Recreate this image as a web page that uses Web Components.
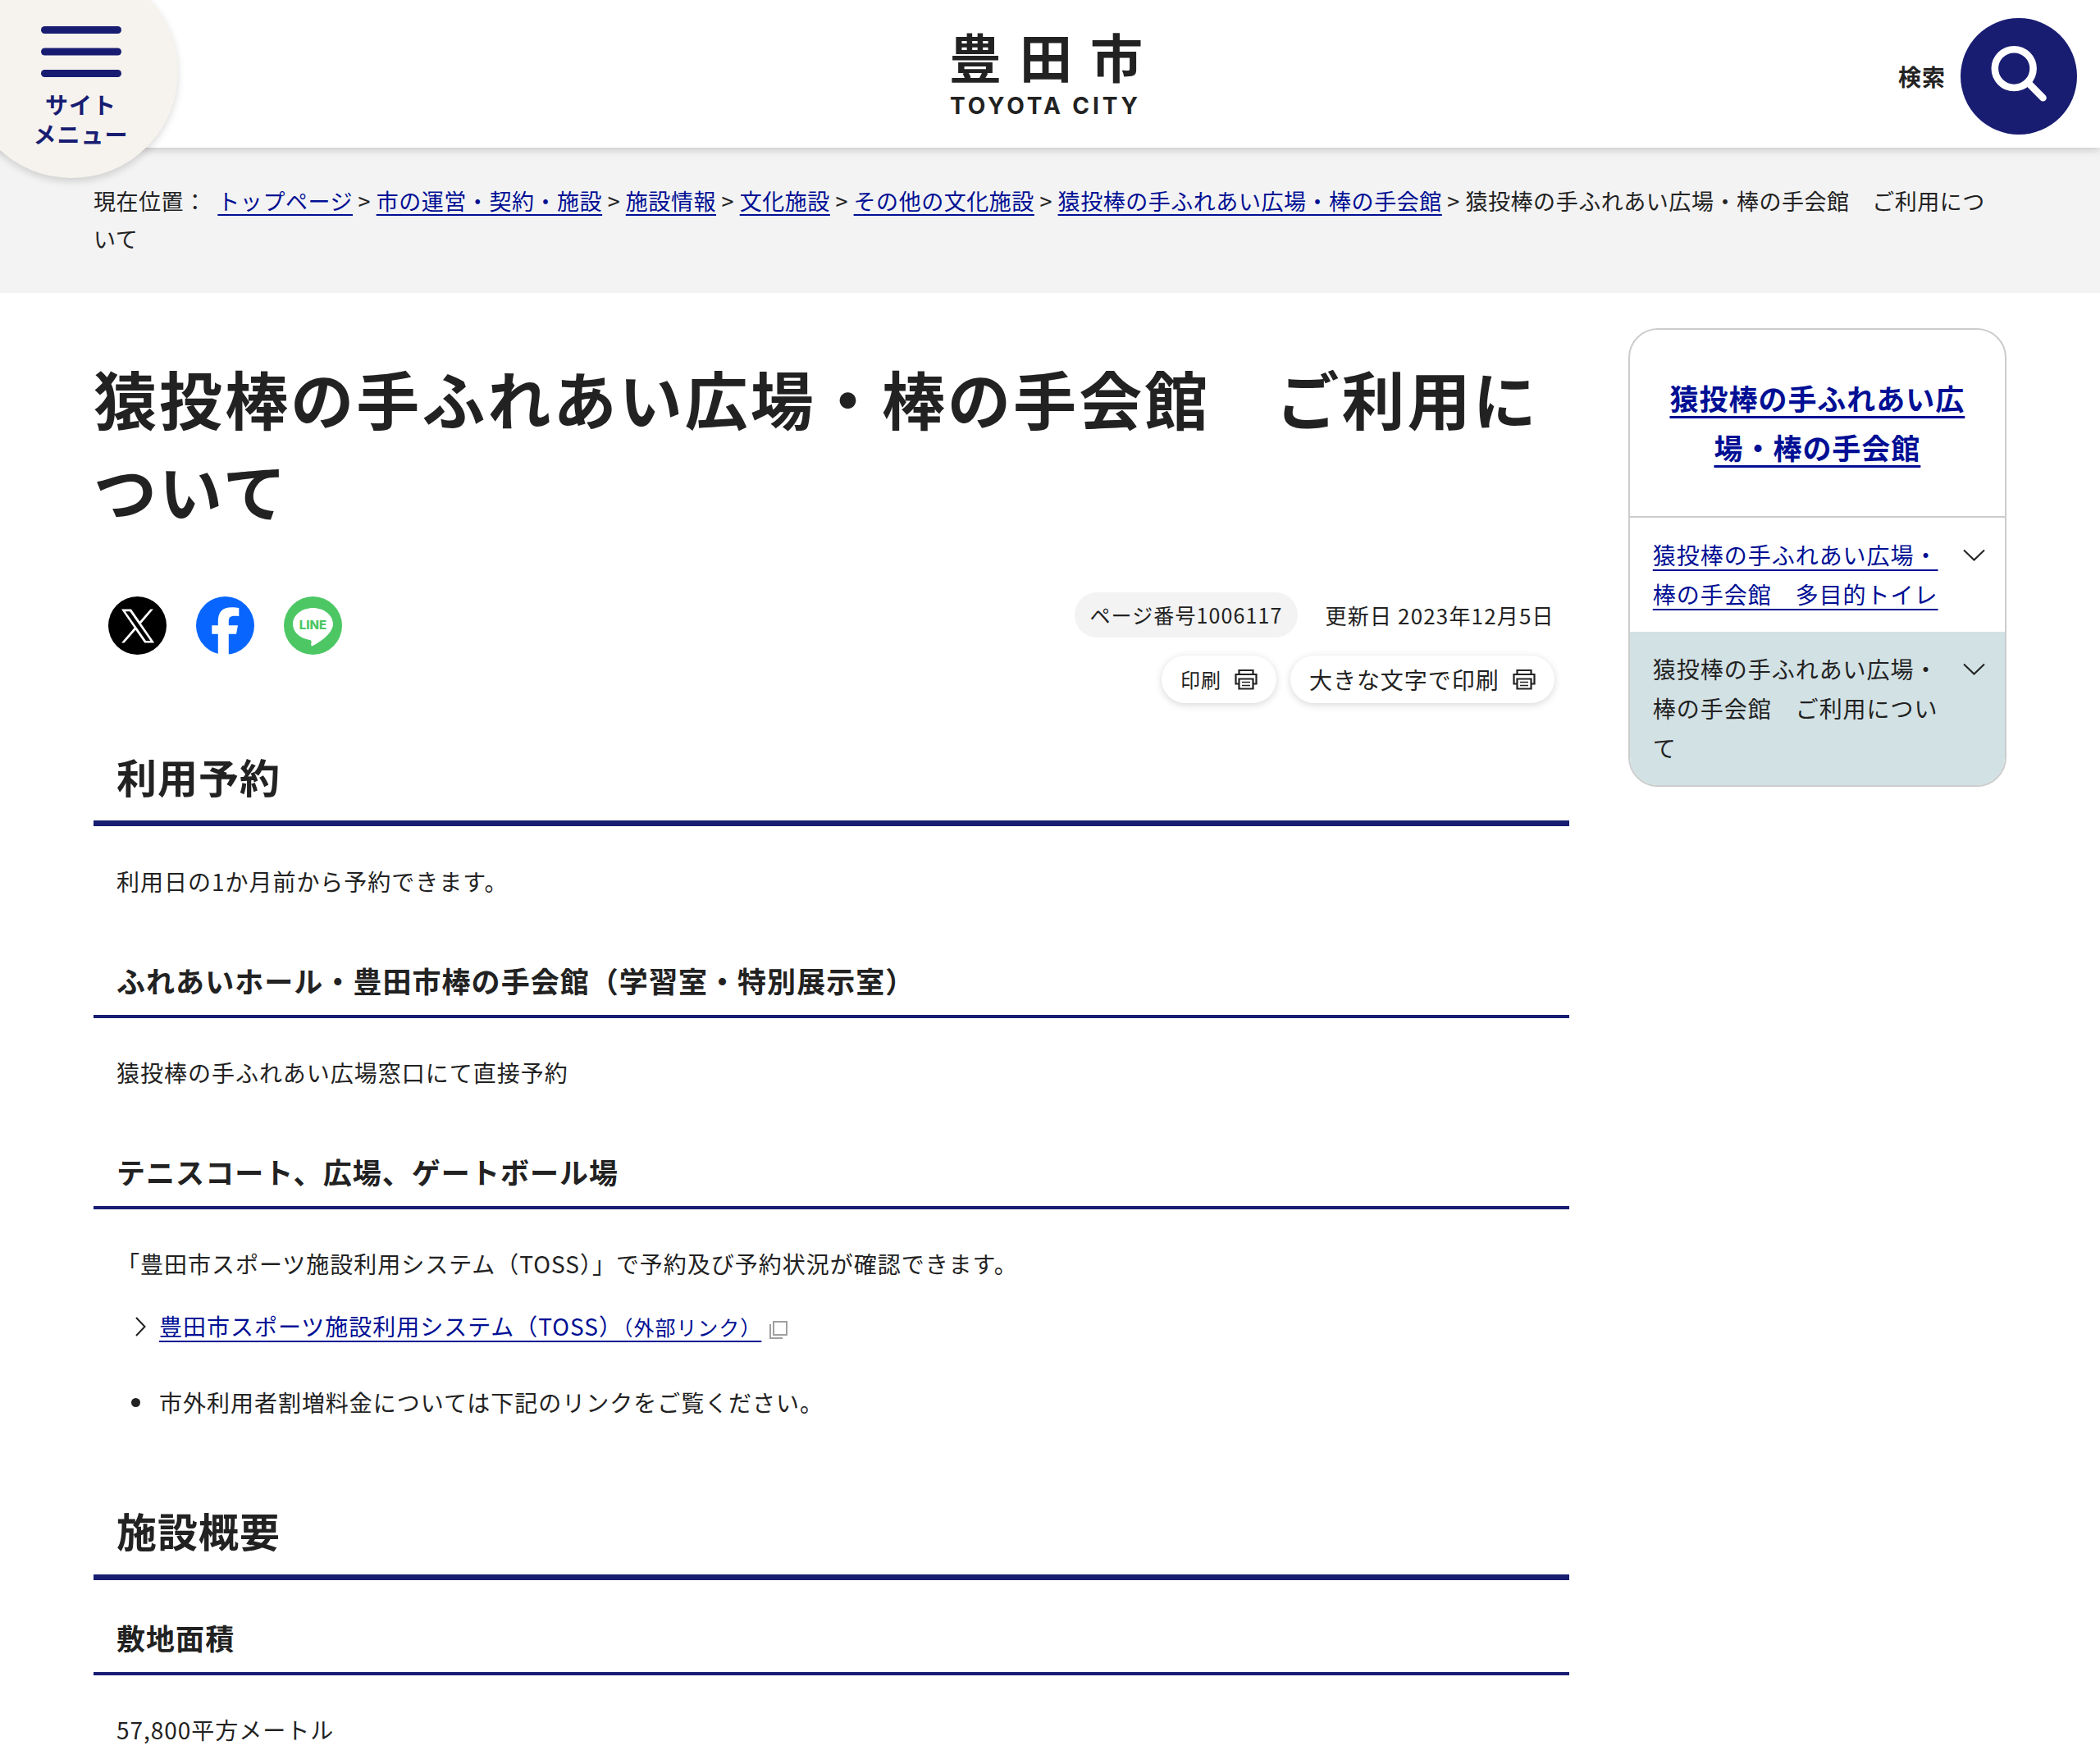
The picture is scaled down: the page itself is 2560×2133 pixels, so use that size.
<!DOCTYPE html>
<html lang="ja">
<head>
<meta charset="UTF-8">
<meta name="viewport" content="width=device-width, initial-scale=1">
<title>猿投棒の手ふれあい広場・棒の手会館 ご利用について</title>
<style>
  body {
    margin: 0;
    background: #ffffff;
    color: #222222;
    font-family: "Noto Sans CJK JP", sans-serif;
    font-size: 28px;
    line-height: 48px;
    letter-spacing: 0.035em;
    --navy: #181d72;
    --link: #000f94;
  }
</style>
</head>
<body>
<toyota-header></toyota-header>
<ruta-pagina></ruta-pagina>
<page-layout>
  <main>
    <page-title>猿投棒の手ふれあい広場・棒の手会館　ご利用について</page-title>
    <page-tools></page-tools>

    <section-title>利用予約</section-title>
    <text-block>利用日の1か月前から予約できます。</text-block>

    <sub-title>ふれあいホール・豊田市棒の手会館（学習室・特別展示室）</sub-title>
    <text-block>猿投棒の手ふれあい広場窓口にて直接予約</text-block>

    <sub-title>テニスコート、広場、ゲートボール場</sub-title>
    <text-block>「豊田市スポーツ施設利用システム（TOSS）」で予約及び予約状況が確認できます。</text-block>
    <link-list></link-list>
    <bullet-item>市外利用者割増料金については下記のリンクをご覧ください。</bullet-item>

    <section-title class="next">施設概要</section-title>
    <sub-title class="first">敷地面積</sub-title>
    <text-block>57,800平方メートル</text-block>
  </main>
  <side-menu slot="side"></side-menu>
</page-layout>

<script>
class ToyotaHeader extends HTMLElement {
  constructor() {
    super();
    this.attachShadow({ mode: 'open' }).innerHTML = `
    <style>
      :host { display: block; position: relative; z-index: 2; }
      header {
        display: grid;
        grid-template-columns: 1fr auto 1fr;
        height: 180px;
        background: #ffffff;
        box-shadow: 0 2px 10px rgba(0, 0, 0, 0.2);
      }
      button {
        font: inherit;
        color: inherit;
        letter-spacing: inherit;
        border: 0;
        padding: 0;
        background: none;
        cursor: pointer;
      }
      /* the round menu button hangs over the corner */
      .menu {
        position: absolute;
        top: -42px;
        left: -42px;
        width: 259px;
        height: 259px;
        padding: 74px 0 0 22px;
        display: flex;
        flex-direction: column;
        align-items: center;
        border-radius: 50%;
        background: #f6f3ee;
        color: var(--navy);
        font-weight: 700;
        line-height: 36px;
        box-shadow: 0 4px 10px rgba(0, 0, 0, 0.15);
      }
      .menu svg { display: block; margin-bottom: 15px; }
      .logo {
        grid-column: 2;
        padding: 32px 10px 0 0;
        display: flex;
        flex-direction: column;
        gap: 7px;
        color: inherit;
        text-decoration: none;
        font-weight: 700;
      }
      .kanji {
        display: flex;
        gap: 22px;
        font-size: 64px;
        line-height: 70px;
        letter-spacing: 0;
      }
      .roman {
        padding-left: 1px;
        font-family: Inter, "Liberation Sans", sans-serif;
        font-weight: 700;
        font-size: 28px;
        line-height: 40px;
        letter-spacing: 0.14em;
      }
      .search {
        justify-self: end;
        align-self: center;
        display: flex;
        align-items: center;
        gap: 18px;
        margin: 5px 28px 0 0;
        font-weight: 700;
      }
      .search svg { display: block; }
    </style>
    <header>
      <button class="menu" type="button">
        <svg width="98" height="62" viewBox="0 0 98 62" fill="currentColor" aria-hidden="true">
          <rect width="98" height="9" rx="4.5"/>
          <rect y="26.5" width="98" height="9" rx="4.5"/>
          <rect y="53" width="98" height="9" rx="4.5"/>
        </svg>
        <span>サイト</span>
        <span>メニュー</span>
      </button>
      <a class="logo" href="#">
        <span class="kanji"><span>豊</span><span>田</span><span>市</span></span>
        <span class="roman">TOYOTA CITY</span>
      </a>
      <button class="search" type="button">
        <span>検索</span>
        <svg width="142" height="142" viewBox="0 0 142 142" aria-hidden="true">
          <circle cx="71" cy="71" r="71" fill="#181d72"/>
          <g fill="none" stroke="#ffffff" stroke-width="8.6" stroke-linecap="round">
            <circle cx="65.2" cy="61.6" r="23.4"/>
            <path d="M82 78.500L100.500 97.300"/>
          </g>
        </svg>
      </button>
    </header>`;
  }
}
customElements.define('toyota-header', ToyotaHeader);


class RutaPagina extends HTMLElement {
  constructor() {
    super();
    const links = [
      'トップページ',
      '市の運営・契約・施設',
      '施設情報',
      '文化施設',
      'その他の文化施設',
      '猿投棒の手ふれあい広場・棒の手会館'
    ];
    this.attachShadow({ mode: 'open' }).innerHTML = `
    <style>
      :host { display: block; background: #f3f3f3; }
      nav {
        padding: 42px 114px 43px;
        font-size: 27px;
        line-height: 46px;
        letter-spacing: 0.02em;
      }
      a {
        color: var(--link);
        text-decoration-thickness: 2px;
        text-underline-offset: 0.2em;
      }
      .label { margin-right: 7px; }
    </style>
    <nav aria-label="現在位置"><span class="label">現在位置：</span> ${links.map(t => `<a href="#">${t}</a> &gt; `).join('')}<span>猿投棒の手ふれあい広場・棒の手会館　ご利用について</span></nav>`;
  }
}
customElements.define('ruta-pagina', RutaPagina);


class PageLayout extends HTMLElement {
  constructor() {
    super();
    this.attachShadow({ mode: 'open' }).innerHTML = `
    <style>
      :host {
        display: grid;
        grid-template-columns: 39fr 10fr;
        gap: 72px;
        align-items: start;
        padding: 0 114px;
      }
    </style>
    <slot></slot>
    <slot name="side"></slot>`;
  }
}
customElements.define('page-layout', PageLayout);


class PageTitle extends HTMLElement {
  constructor() {
    super();
    this.attachShadow({ mode: 'open' }).innerHTML = `
    <style>
      :host { display: block; padding-top: 72px; }
      h1 {
        margin: 0;
        font-size: 77px;
        line-height: 112px;
        letter-spacing: 0.04em;
      }
    </style>
    <h1><slot></slot></h1>`;
  }
}
customElements.define('page-title', PageTitle);


class PageTools extends HTMLElement {
  constructor() {
    super();
    const printer = `
      <svg width="28" height="26" viewBox="0 0 28 26" fill="none" stroke="#222222" stroke-width="2.200" aria-hidden="true">
        <path d="M5.500 7V2h17v5"/>
        <path d="M5.500 18.500H1.500V7h25v11.500h-4"/>
        <path d="M5.500 12.500h17v12h-17z"/>
        <path d="M9 16.500h10M9 20.500h10" stroke-width="1.500"/>
      </svg>`;
    this.attachShadow({ mode: 'open' }).innerHTML = `
    <style>
      :host {
        display: flex;
        justify-content: space-between;
        align-items: flex-start;
        padding: 69px 18px 0;
      }
      .share { display: flex; gap: 36px; padding-top: 5px; }
      .share a, .share svg { display: block; }
      .info {
        display: flex;
        flex-direction: column;
        align-items: flex-end;
        gap: 22px;
        font-size: 26px;
      }
      .row { display: flex; align-items: center; gap: 34px; }
      .row span { letter-spacing: 0.045em; }
      .buttons { gap: 17px; }
      .number {
        padding: 0 18px;
        border-radius: 28px;
        background: #f3f3f3;
        font-size: 25px;
        line-height: 55px;
      }
      button {
        display: flex;
        align-items: center;
        gap: 16px;
        height: 58px;
        padding: 0 23px;
        border: 0;
        border-radius: 29px;
        background: #ffffff;
        color: inherit;
        font: inherit;
        font-size: 28px;
        letter-spacing: inherit;
        box-shadow: 0 2px 10px rgba(0, 0, 0, 0.16);
        cursor: pointer;
      }
      button.small { font-size: 24px; }
    </style>
    <div class="share">
      <a href="#" aria-label="X">
        <svg width="71" height="71" viewBox="0 0 71 71">
          <circle cx="35.500" cy="35.500" r="35.500" fill="#000000"/>
          <path transform="translate(16 15.500) scale(.0335)" fill="#ffffff" d="M714.163 519.284L1160.890 0H1055.030L667.137 450.887L357.328 0H0L468.492 681.821L0 1226.370H105.866L515.491 750.218L842.672 1226.370H1200L714.137 519.284H714.163ZM569.165 687.828L521.697 619.934L144.011 79.694H306.615L611.412 515.685L658.880 583.579L1055.080 1150.300H892.476L569.165 687.854V687.828Z"/>
        </svg>
      </a>
      <a href="#" aria-label="Facebook">
        <svg width="71" height="71" viewBox="0 0 71 71">
          <circle cx="35.500" cy="35.500" r="35.500" fill="#0866ff"/>
          <path fill="#ffffff" d="M26.800 71V45.700H19.300V35.300h7.500v-4.800C26.800 18.500 32.300 13.200 43.500 13.200c3.200 0 6.500.4 8.800.9v10c-1.500-.2-3.500-.3-5.500-.3-5.200 0-7 2-7 6.700v4.800h11.200l-2 10.400h-9.200V71z"/>
        </svg>
      </a>
      <a href="#" aria-label="LINE">
        <svg width="71" height="71" viewBox="0 0 71 71">
          <circle cx="35.500" cy="35.500" r="35.500" fill="#4cc764"/>
          <path fill="#ffffff" d="M35.500 14C22 14 11 22.800 11 33.600c0 9.700 8.700 17.800 20.400 19.300 2.700.6 2.400 2 1.800 5.200-.1 1-.3 3 2.500 1.800S60 46.500 60 33.600C60 22.800 49 14 35.500 14z"/>
          <text x="35.500" y="39.500" text-anchor="middle" font-family="Inter, sans-serif" font-weight="800" font-size="15" letter-spacing="0" fill="#4cc764">LINE</text>
        </svg>
      </a>
    </div>
    <div class="info">
      <div class="row"><span class="number">ページ番号1006117</span><span>更新日 2023年12月5日</span></div>
      <div class="row buttons">
        <button class="small" type="button">印刷${printer}</button>
        <button type="button">大きな文字で印刷${printer}</button>
      </div>
    </div>`;
  }
}
customElements.define('page-tools', PageTools);


class SectionTitle extends HTMLElement {
  constructor() {
    super();
    this.attachShadow({ mode: 'open' }).innerHTML = `
    <style>
      :host { display: block; margin: 52px 0 43px; }
      :host(.next) { margin-top: 95px; }
      h2 {
        margin: 0;
        padding: 0 28px 17px;
        border-bottom: 7px solid var(--navy);
        font-size: 49px;
        line-height: 74px;
      }
    </style>
    <h2><slot></slot></h2>`;
  }
}
customElements.define('section-title', SectionTitle);


class SubTitle extends HTMLElement {
  constructor() {
    super();
    this.attachShadow({ mode: 'open' }).innerHTML = `
    <style>
      :host { display: block; margin: 70px 0 42px; }
      :host(.first) { margin-top: 0; }
      h3 {
        margin: 0;
        padding: 0 28px 15px;
        border-bottom: 4px solid var(--navy);
        font-size: 35px;
        line-height: 54px;
        letter-spacing: 0.03em;
      }
    </style>
    <h3><slot></slot></h3>`;
  }
}
customElements.define('sub-title', SubTitle);


class TextBlock extends HTMLElement {
  constructor() {
    super();
    this.attachShadow({ mode: 'open' }).innerHTML = `
    <style>
      :host { display: block; }
      p { margin: 0; padding: 0 28px; }
    </style>
    <p><slot></slot></p>`;
  }
}
customElements.define('text-block', TextBlock);


class LinkList extends HTMLElement {
  constructor() {
    super();
    this.attachShadow({ mode: 'open' }).innerHTML = `
    <style>
      :host { display: block; margin: 28px 0 44px; }
      ul { margin: 0; padding: 0 0 0 51px; list-style: none; }
      li { display: flex; align-items: center; }
      .arrow { margin-right: 16px; }
      .blank { margin: 8px 0 0 10px; }
      a {
        color: var(--link);
        text-decoration-thickness: 2px;
        text-underline-offset: 0.2em;
      }
      small { font-size: 25px; }
    </style>
    <ul>
      <li>
        <svg class="arrow" width="13" height="24" viewBox="0 0 13 24" fill="none" stroke="#222222" stroke-width="2" aria-hidden="true">
          <path d="M1 1l10.500 11L1 23"/>
        </svg>
        <a href="#">豊田市スポーツ施設利用システム（TOSS）<small>（外部リンク）</small></a>
        <svg class="blank" width="22" height="22" viewBox="0 0 22 22" fill="none" stroke="#a0a0a0" stroke-width="2" aria-hidden="true">
          <path d="M5 1h16v16H5z"/>
          <path d="M1 4v17h15"/>
        </svg>
      </li>
    </ul>`;
  }
}
customElements.define('link-list', LinkList);


class BulletItem extends HTMLElement {
  constructor() {
    super();
    this.attachShadow({ mode: 'open' }).innerHTML = `
    <style>
      :host { display: block; }
      ul { margin: 0; padding: 0 0 0 46px; list-style: none; }
      li { display: flex; align-items: center; gap: 23px; }
      li::before {
        content: "";
        width: 11px;
        height: 11px;
        border-radius: 50%;
        background: #222222;
      }
    </style>
    <ul><li><span><slot></slot></span></li></ul>`;
  }
}
customElements.define('bullet-item', BulletItem);


class SideMenu extends HTMLElement {
  constructor() {
    super();
    const chevron = `
      <svg width="27" height="16" viewBox="0 0 27 16" fill="none" stroke="#222222" stroke-width="2" aria-hidden="true">
        <path d="M1 1.500l12.500 12L26 1.500"/>
      </svg>`;
    this.attachShadow({ mode: 'open' }).innerHTML = `
    <style>
      :host { display: block; margin-top: 43px; }
      nav {
        border: 2px solid #cccccc;
        border-radius: 36px;
        overflow: hidden;
      }
      a {
        color: var(--link);
        text-decoration-thickness: 2px;
        text-underline-offset: 0.2em;
      }
      h2 {
        margin: 0;
        padding: 53px 44px 54px;
        border-bottom: 2px solid #cccccc;
        text-align: center;
        font-size: 35px;
        line-height: 60px;
      }
      h2 a { text-decoration-thickness: 3px; }
      ul { margin: 0; padding: 0; list-style: none; }
      li {
        display: flex;
        align-items: flex-start;
        justify-content: space-between;
        gap: 24px;
        padding: 21px 24px 22px 28px;
      }
      li svg { flex: none; margin-top: 17px; }
      .current { background: #d2e1e4; }
    </style>
    <nav>
      <h2><a href="#">猿投棒の手ふれあい広場・棒の手会館</a></h2>
      <ul>
        <li><a href="#">猿投棒の手ふれあい広場・棒の手会館　多目的トイレ</a>${chevron}</li>
        <li class="current"><span>猿投棒の手ふれあい広場・棒の手会館　ご利用について</span>${chevron}</li>
      </ul>
    </nav>`;
  }
}
customElements.define('side-menu', SideMenu);
</script>
</body>
</html>
